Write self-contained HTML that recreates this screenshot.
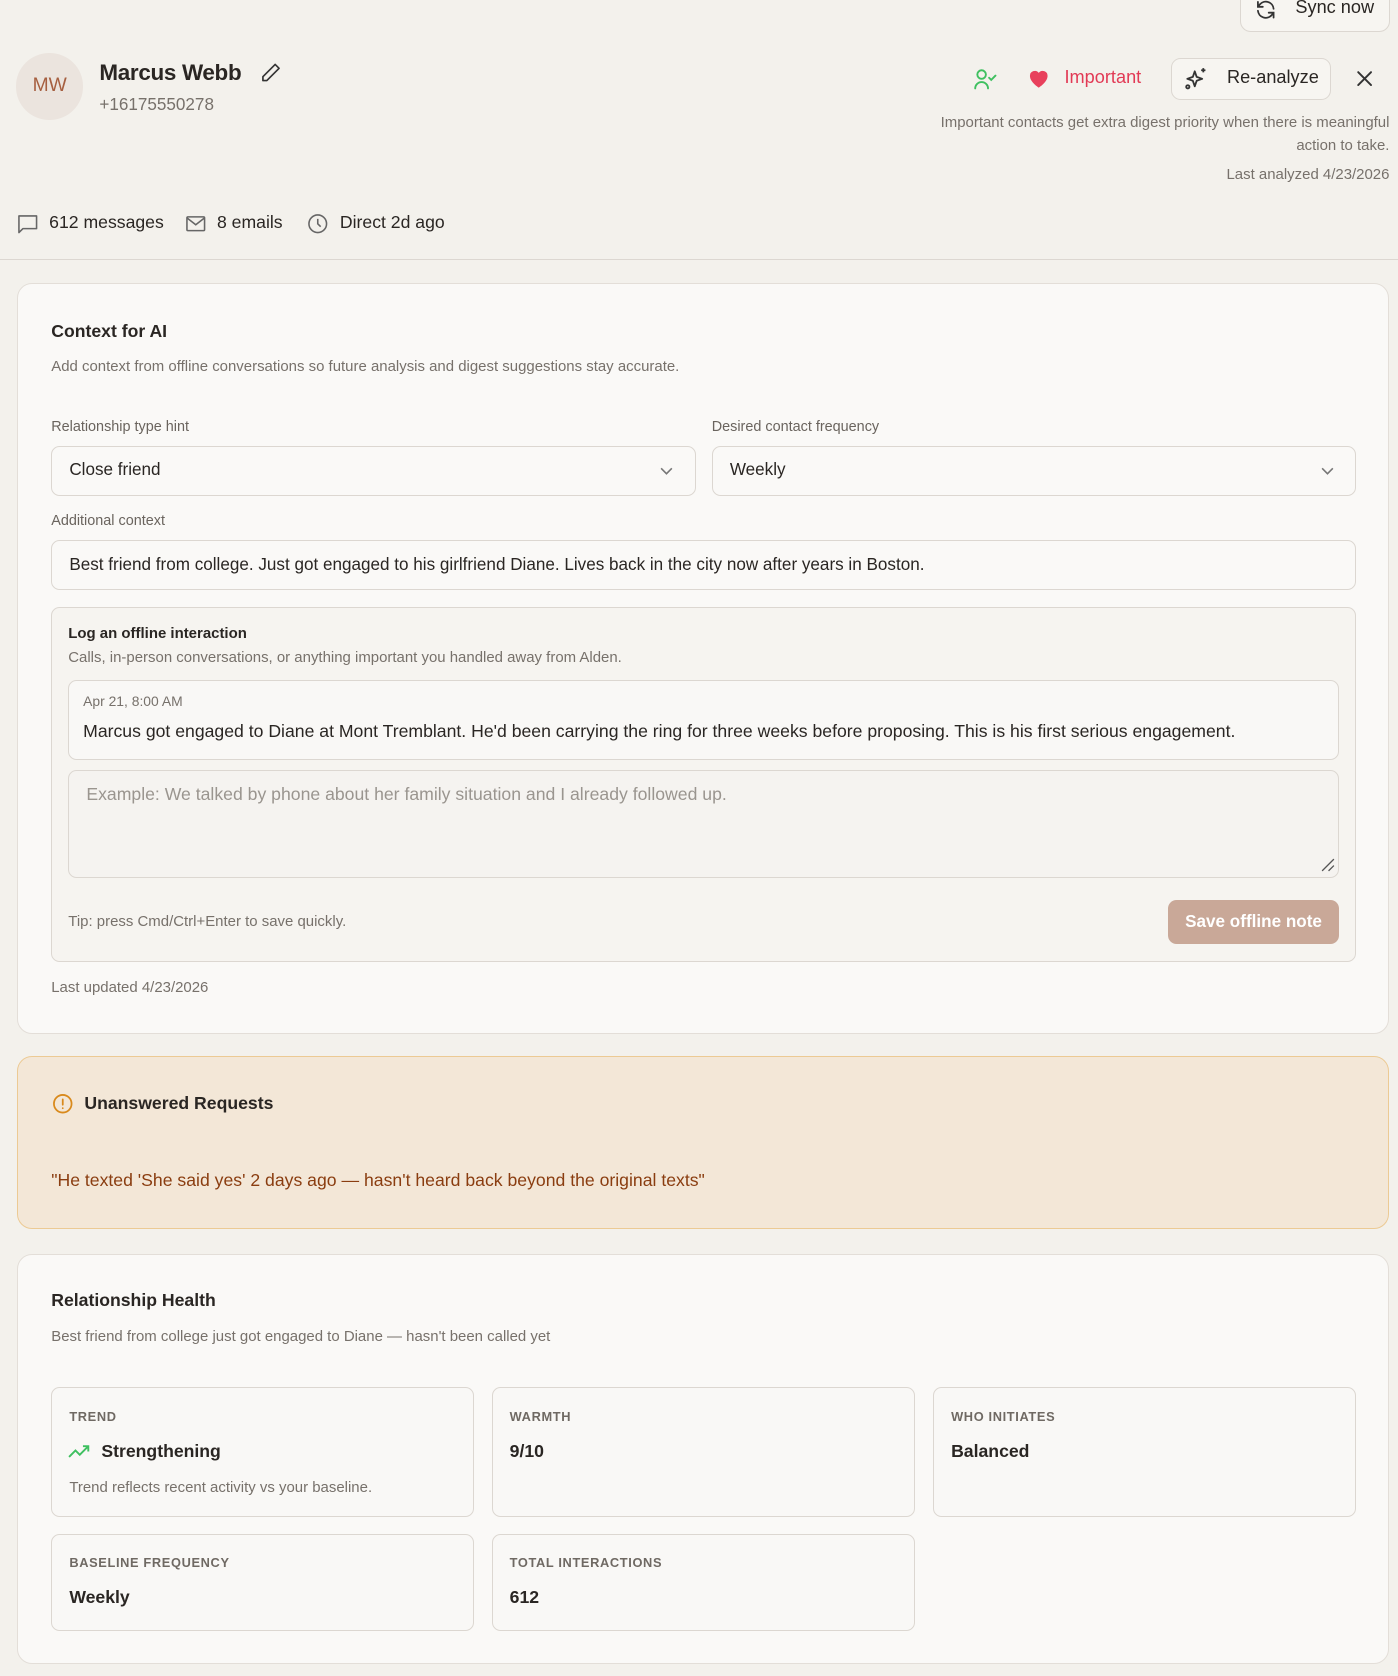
<!DOCTYPE html>
<html><head><meta charset="utf-8"><style>
html{zoom:1.0688}
*{box-sizing:border-box;margin:0;padding:0}
body{width:1308px;height:1568px;overflow:hidden;background:#f3f1ec;font-family:"Liberation Sans",sans-serif;color:#2a2623;position:relative}
.a{position:absolute;white-space:nowrap}
.g{color:#77716b}
.card{position:absolute;left:16px;width:1284px;background:#faf9f7;border:1px solid #e3ded8;border-radius:14px}
.box{position:absolute;border:1px solid #dcd7d1;border-radius:8px;background:#faf9f7}
.sel{height:47px;font-size:16px;padding:13px 16px}
.lbl{font-size:13.5px;color:#6a645e}
.st{position:absolute;border:1px solid #dcd7d1;border-radius:8px;background:#f9f8f6;width:396px}
.st .k{position:absolute;left:16px;top:19px;font-size:12px;letter-spacing:.6px;color:#6f6963;font-weight:bold}
.st .v{position:absolute;left:16px;top:49px;font-size:16.5px;font-weight:600}
svg{position:absolute}
</style></head><body>
<div class="a" style="left:1160px;top:-12px;width:141px;height:42px;border:1px solid #dcd7d1;border-radius:10px;background:#f7f5f1"></div>
<svg style="left:1173px;top:-2px" width="22" height="22" viewBox="0 0 24 24" fill="none" stroke="#333" stroke-width="1.8" stroke-linecap="round"><path d="M20 11a8 8 0 0 0-14-4.5L4 9M4 4v5h5M4 13a8 8 0 0 0 14 4.5L20 15M20 20v-5h-5"/></svg>
<div class="a" style="left:1212px;top:-3px;font-size:17px">Sync now</div>

<div class="a" style="left:15px;top:50px;width:63px;height:62px;border-radius:50%;background:#ebe4de;color:#a65f40;font-size:18px;text-align:center;line-height:62px">MW</div>
<div class="a" style="left:93px;top:56px;font-size:21px;font-weight:bold;letter-spacing:-.3px">Marcus Webb</div>
<svg style="left:242px;top:57px" width="22" height="22" viewBox="0 0 24 24" fill="none" stroke="#333" stroke-width="1.7" stroke-linejoin="round"><path d="M16.5 3.5l4 4L8 20H4v-4z"/></svg>
<div class="a g" style="left:93px;top:89px;font-size:16px">+16175550278</div>

<svg style="left:909px;top:62px" width="24" height="24" viewBox="0 0 24 24" fill="none" stroke="#3fc060" stroke-width="1.8" stroke-linecap="round"><circle cx="9" cy="8" r="4"/><path d="M3 21a6 6 0 0 1 12 0M16 11l2 2 4-4"/></svg>
<svg style="left:961px;top:63px" width="22" height="22" viewBox="0 0 24 24"><path fill="#e8405c" d="M12 21s-9-5.5-9-12a5 5 0 0 1 9-3 5 5 0 0 1 9 3c0 6.5-9 12-9 12z"/></svg>
<div class="a" style="left:996px;top:63px;font-size:17px;color:#e23a55">Important</div>
<div class="a" style="left:1096px;top:54px;width:149px;height:40px;border:1px solid #dcd7d1;border-radius:9px;background:#f7f5f1"></div>
<svg style="left:1107px;top:62px" width="24" height="24" viewBox="0 0 24 24" fill="none" stroke="#333" stroke-width="1.7" stroke-linejoin="round"><path d="M11 5l1.8 5.2L18 12l-5.2 1.8L11 19l-1.8-5.2L4 12l5.2-1.8z"/><path d="M19 2v4M17 4h4"/><circle cx="4.5" cy="19.5" r="1.5"/></svg>
<div class="a" style="left:1148px;top:63px;font-size:17px">Re-analyze</div>
<svg style="left:1268px;top:65px" width="18" height="18" viewBox="0 0 18 18" stroke="#333" stroke-width="1.8" stroke-linecap="round"><path d="M3 3l12 12M15 3L3 15"/></svg>
<div class="a g" style="right:8px;top:105px;font-size:14px;text-align:right;line-height:21px">Important contacts get extra digest priority when there is meaningful<br>action to take.</div>
<div class="a g" style="right:8px;top:155px;font-size:14px">Last analyzed 4/23/2026</div>

<svg style="left:15px;top:198px" width="22" height="22" viewBox="0 0 24 24" fill="none" stroke="#666" stroke-width="1.6" stroke-linejoin="round"><path d="M3 4h18v13H7l-4 4z"/></svg>
<div class="a" style="left:46px;top:198px;font-size:16.5px">612 messages</div>
<svg style="left:172px;top:198px" width="22" height="22" viewBox="0 0 24 24" fill="none" stroke="#666" stroke-width="1.6"><rect x="3" y="5" width="18" height="14" rx="1"/><path d="M3 6l9 7 9-7"/></svg>
<div class="a" style="left:203px;top:198px;font-size:16.5px">8 emails</div>
<svg style="left:286px;top:198px" width="22" height="22" viewBox="0 0 24 24" fill="none" stroke="#666" stroke-width="1.6"><circle cx="12" cy="12" r="9"/><path d="M12 7v5l3 3"/></svg>
<div class="a" style="left:318px;top:198px;font-size:16.5px">Direct 2d ago</div>
<div class="a" style="left:0;top:242px;width:1308px;height:1px;background:#dcd7d1"></div>

<div class="card" style="top:265px;height:702px">
<div class="a" style="left:31px;top:34px;font-size:16.5px;font-weight:600">Context for AI</div>
<div class="a g" style="left:31px;top:69px;font-size:14px">Add context from offline conversations so future analysis and digest suggestions stay accurate.</div>
<div class="a lbl" style="left:31px;top:126px">Relationship type hint</div>
<div class="a lbl" style="left:649px;top:126px">Desired contact frequency</div>
<div class="box sel" style="left:31px;top:151px;width:603px">Close friend</div>
<svg style="left:600px;top:167px" width="14" height="14" viewBox="0 0 14 14" fill="none" stroke="#777" stroke-width="1.5"><path d="M2 5l5 5 5-5"/></svg>
<div class="box sel" style="left:649px;top:151px;width:603px">Weekly</div>
<svg style="left:1218px;top:167px" width="14" height="14" viewBox="0 0 14 14" fill="none" stroke="#777" stroke-width="1.5"><path d="M2 5l5 5 5-5"/></svg>
<div class="a lbl" style="left:31px;top:214px">Additional context</div>
<div class="box sel" style="left:31px;top:239px;width:1221px">Best friend from college. Just got engaged to his girlfriend Diane. Lives back in the city now after years in Boston.</div>
<div class="box" style="left:31px;top:302px;width:1221px;height:332px;background:#f6f4f0">
<div class="a" style="left:15px;top:16px;font-size:14px;font-weight:bold">Log an offline interaction</div>
<div class="a g" style="left:15px;top:38px;font-size:14px">Calls, in-person conversations, or anything important you handled away from Alden.</div>
<div class="box" style="left:15px;top:67px;width:1189px;height:75px;background:#f9f8f6">
<div class="a g" style="left:13px;top:12px;font-size:13px">Apr 21, 8:00 AM</div>
<div class="a" style="left:13px;top:38px;font-size:16.5px">Marcus got engaged to Diane at Mont Tremblant. He'd been carrying the ring for three weeks before proposing. This is his first serious engagement.</div>
</div>
<div class="box" style="left:15px;top:152px;width:1189px;height:101px;background:#f5f3f0">
<div class="a" style="left:16px;top:12px;font-size:16.5px;color:#9a958f">Example: We talked by phone about her family situation and I already followed up.</div>
<svg style="left:1170px;top:80px" width="14" height="14" viewBox="0 0 14 14" stroke="#555" stroke-width="1.2"><path d="M13 2L2 13M13 8L8 13"/></svg>
</div>
<div class="a g" style="left:15px;top:285px;font-size:14px">Tip: press Cmd/Ctrl+Enter to save quickly.</div>
<div class="a" style="left:1044px;top:273px;width:160px;height:41px;border-radius:8px;background:#c9a898;color:#fff;font-size:16px;font-weight:600;text-align:center;line-height:41px">Save offline note</div>
</div>
<div class="a g" style="left:31px;top:650px;font-size:14px">Last updated 4/23/2026</div>
</div>

<div class="card" style="top:988px;height:162px;background:#f3e7d7;border-color:#ecca94">
<svg style="left:31px;top:33px" width="22" height="22" viewBox="0 0 24 24" fill="none" stroke="#d98a1c" stroke-width="1.8" stroke-linecap="round"><circle cx="12" cy="12" r="9"/><path d="M12 7.5v5.5M12 16.5v.1"/></svg>
<div class="a" style="left:62px;top:34px;font-size:16.5px;font-weight:600">Unanswered Requests</div>
<div class="a" style="left:31px;top:106px;font-size:16.5px;color:#8a3d10">"He texted 'She said yes' 2 days ago — hasn't heard back beyond the original texts"</div>
</div>

<div class="card" style="top:1173px;height:384px">
<div class="a" style="left:31px;top:33px;font-size:16.5px;font-weight:600">Relationship Health</div>
<div class="a g" style="left:31px;top:69px;font-size:14px">Best friend from college just got engaged to Diane — hasn't been called yet</div>
<div class="st" style="left:31px;top:124px;height:121px"><div class="k">TREND</div>
<svg style="left:15px;top:51px" width="22" height="16" viewBox="0 0 22 16" fill="none" stroke="#3fc060" stroke-width="1.8"><path d="M1 13l6-6 4 4 8-8M14 3h5v5"/></svg>
<div class="v" style="left:46px">Strengthening</div>
<div class="a g" style="left:16px;top:85px;font-size:14px">Trend reflects recent activity vs your baseline.</div></div>
<div class="st" style="left:443px;top:124px;height:121px"><div class="k">WARMTH</div><div class="v">9/10</div></div>
<div class="st" style="left:856px;top:124px;height:121px"><div class="k">WHO INITIATES</div><div class="v">Balanced</div></div>
<div class="st" style="left:31px;top:261px;height:91px"><div class="k">BASELINE FREQUENCY</div><div class="v">Weekly</div></div>
<div class="st" style="left:443px;top:261px;height:91px"><div class="k">TOTAL INTERACTIONS</div><div class="v">612</div></div>
</div>
</body></html>
